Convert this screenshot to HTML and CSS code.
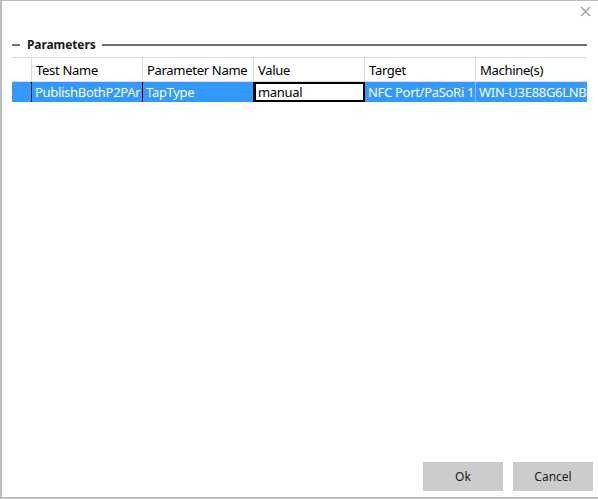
FILE: index.html
```html
<!DOCTYPE html>
<html>
<head>
<meta charset="utf-8">
<link rel="stylesheet" href="styles.css">
</head>
<body>
<div class="window">
  <div class="titlebar">
    <svg class="close" width="11" height="11" viewBox="0 0 11 11"><path d="M1 1 L10 10 M10 1 L1 10" stroke="#a8a8a8" stroke-width="1.6" fill="none"/></svg>
  </div>
  <div class="group">
    <div class="legend">
      <span class="dash"></span>
      <span class="legend-text">Parameters</span>
      <span class="rule"></span>
    </div>
    <div class="grid">
      <div class="row head">
        <div class="cell rh"></div>
        <div class="cell">Test Name</div>
        <div class="cell">Parameter Name</div>
        <div class="cell">Value</div>
        <div class="cell">Target</div>
        <div class="cell">Machine(s)</div>
      </div>
      <div class="row sel">
        <div class="cell rh"></div>
        <div class="cell dark">PublishBothP2PAr</div>
        <div class="cell">TapType</div>
        <div class="cell edit"><span class="editbox">manual</span></div>
        <div class="cell light">NFC Port/PaSoRi 1</div>
        <div class="cell last">WIN-U3E88G6LNBN</div>
      </div>
    </div>
  </div>
  <div class="spacer"></div>
  <div class="buttons">
    <button class="btn">Ok</button>
    <button class="btn">Cancel</button>
  </div>
</div>
</body>
</html>
```

FILE: styles.css
```css
html, body {
  margin: 0;
  padding: 0;
  background: #ffffff;
}
body {
  font-family: "Noto Sans", "Open Sans", sans-serif;
  font-size: 13px;
  letter-spacing: -0.3px;
  color: #000;
}
.window {
  width: 598px;
  height: 499px;
  box-sizing: border-box;
  border-left: 2px solid #bdbdbd;
  border-top: 1px solid #bdbdbd;
  border-bottom: 2px solid #bdbdbd;
  display: flex;
  flex-direction: column;
  background: #fff;
}
.titlebar {
  height: 36px;
  display: flex;
  justify-content: flex-end;
  align-items: flex-start;
  padding-right: 7px;
}
.close {
  margin-top: 5px;
}
.group {
  padding: 0 11px 0 10px;
}
.legend {
  height: 14px;
  display: flex;
  align-items: center;
  margin-top: 1px;
}
.dash {
  width: 8px;
  height: 2px;
  background: #707070;
}
.legend-text {
  font-weight: bold;
  font-size: 12px;
  letter-spacing: -0.1px;
  color: #1a1a1a;
  margin: 0 6px 0 7px;
  line-height: 14px;
}
.rule {
  flex: 1;
  height: 2px;
  background: #707070;
}
.grid {
  margin-top: 5px;
}
.row {
  display: grid;
  grid-template-columns: 20px repeat(5, 111px);
}
.head {
  height: 25px;
  box-sizing: border-box;
  border-top: 1px solid #dcdcdc;
  border-bottom: 1px solid #dcdcdc;
}
.head .cell {
  border-right: 1px solid #dcdcdc;
  padding-left: 4px;
  padding-top: 2px;
  line-height: 21px;
}
.head .cell:last-child {
  border-right: none;
}
.cell {
  box-sizing: border-box;
  white-space: nowrap;
  overflow: hidden;
}
.sel {
  height: 20px;
  background: #3399ff;
  color: #fff;
}
.sel .cell {
  padding-left: 3px;
  padding-top: 1px;
  line-height: 19px;
  border-right: 1px solid #000;
}
.sel .rh {
  border-right: 1px solid #000;
}
.sel .light {
  border-right: 1px solid #8cc4ff;
}
.sel .last {
  border-right: none;
}
.sel .edit {
  padding: 0;
  border-right: none;
  background: #fff;
}
.editbox {
  display: block;
  height: 20px;
  box-sizing: border-box;
  border: 2px solid #000;
  color: #000;
  padding-left: 2px;
  padding-top: 1px;
  line-height: 15px;
}
.spacer {
  flex: 1;
}
.buttons {
  display: flex;
  justify-content: flex-end;
  gap: 10px;
  padding: 0 5px 6px 0;
}
.btn {
  width: 80px;
  height: 29px;
  border: none;
  background: #cccccc;
  font-family: "Noto Sans", "Open Sans", sans-serif;
  font-size: 12px;
  color: #1a1a1a;
  padding: 0;
}
```
